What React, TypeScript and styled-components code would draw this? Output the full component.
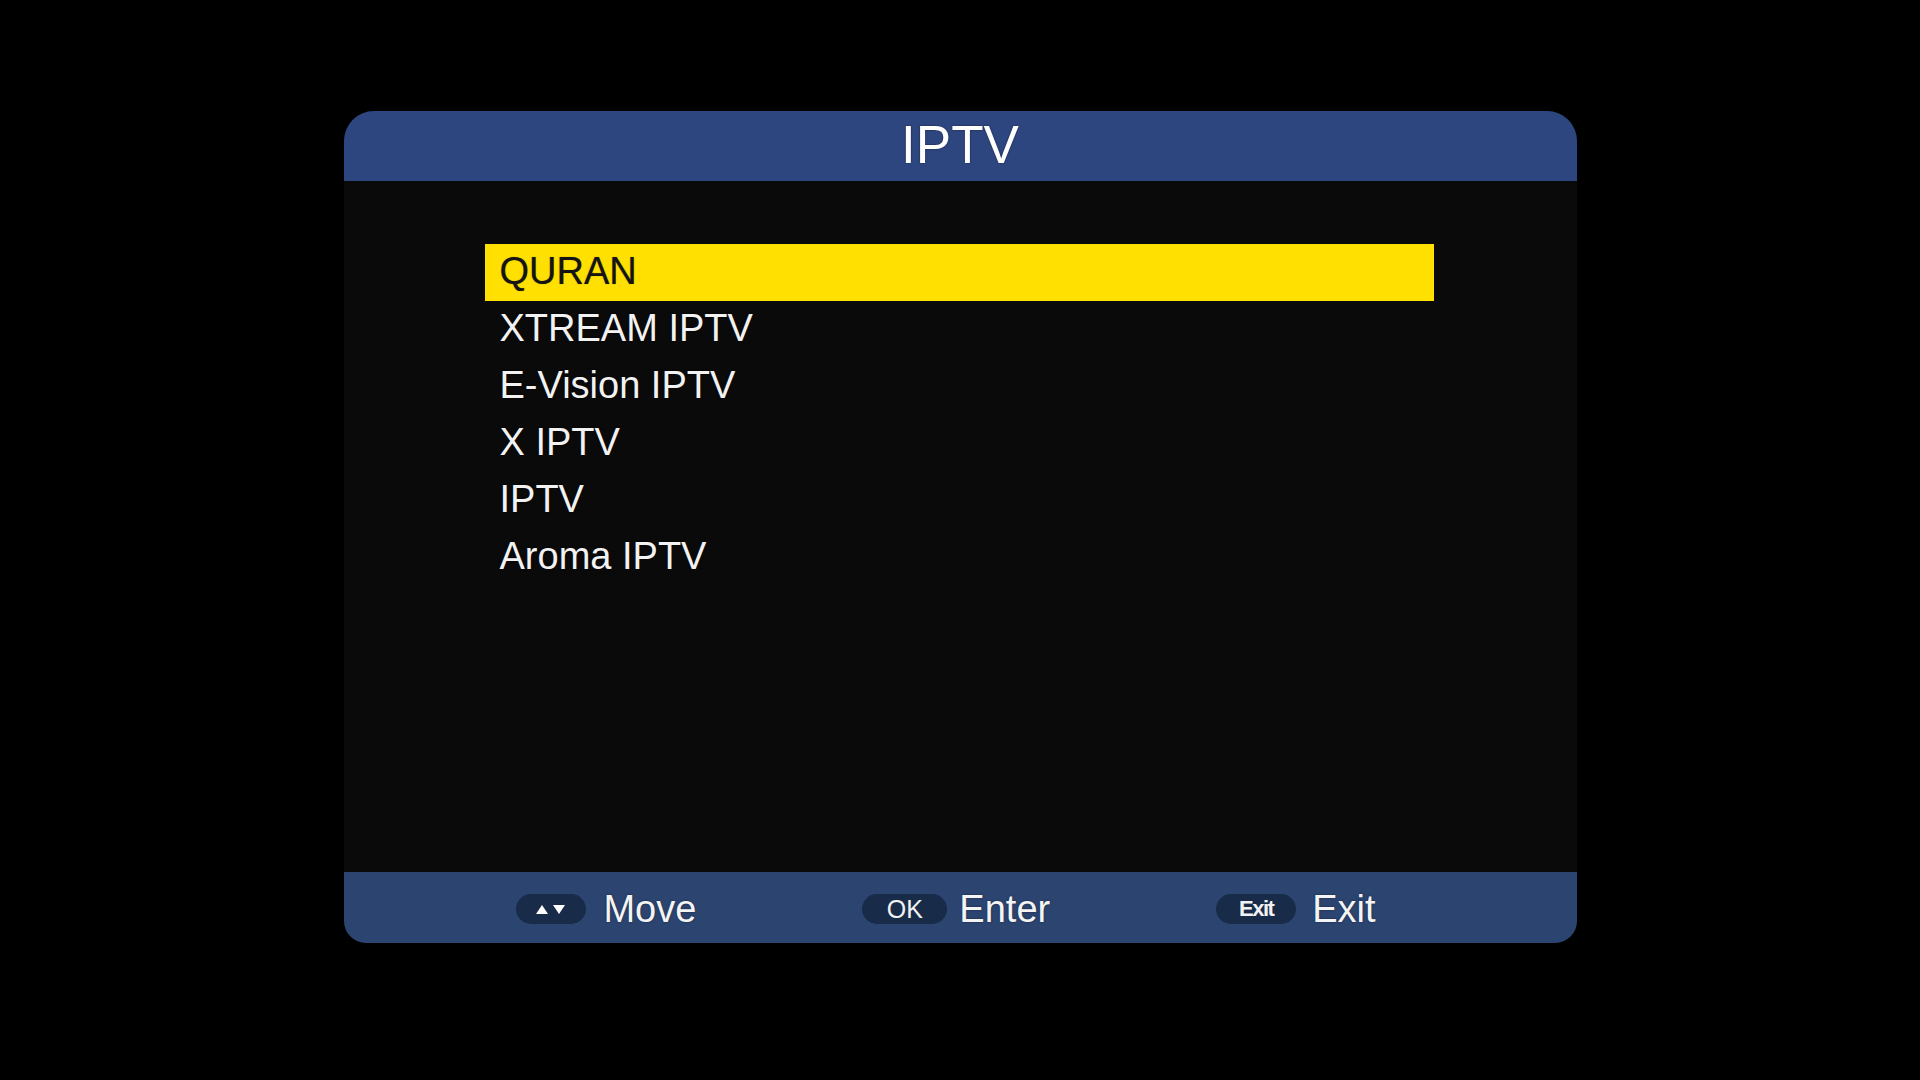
import styled, { createGlobalStyle } from "styled-components";

const GlobalStyle = createGlobalStyle`
    html, body {
        margin: 0;
        padding: 0;
        background: #000000;
    }
    body {
        font-family: "Liberation Sans", Arial, sans-serif;
    }
`;

const StyledScreen = styled.div`
    width: 1920px;
    height: 1080px;
    background: #000000;
    overflow: hidden;
    display: flex;
    justify-content: center;
    align-items: flex-start;
`;

const StyledPanel = styled.div`
    margin-top: 111px;
    width: 1233px;
    height: 832px;
    display: flex;
    flex-direction: column;
    background: #0a0a0a;
    border-radius: 30px 30px 22px 22px;
    overflow: hidden;
`;

const StyledHeader = styled.div`
    height: 70px;
    flex-shrink: 0;
    background: #2e4680;
    display: flex;
    justify-content: center;
    align-items: center;
    color: #ffffff;
    font-size: 53px;
    line-height: 1;
    padding-bottom: 4px;
    box-sizing: border-box;
    text-shadow: 0 0 2px rgba(0, 0, 0, 0.6);
`;

const StyledBody = styled.div`
    flex: 1;
    padding: 63px 143px 0 141px;
`;

const StyledList = styled.div`
    display: flex;
    flex-direction: column;
`;

const StyledItem = styled.div<{ $active?: boolean }>`
    height: 57px;
    display: flex;
    align-items: center;
    padding-left: 15px;
    padding-bottom: 2px;
    box-sizing: border-box;
    font-size: 38px;
    color: ${(p) => (p.$active ? "#141414" : "#f2f2f2")};
    background: ${(p) => (p.$active ? "#ffe000" : "transparent")};
    text-shadow: ${(p) =>
        p.$active ? "0 0 1px rgba(0, 0, 0, 0.5)" : "0 0 2px rgba(0, 0, 0, 0.9)"};
`;

const StyledFooter = styled.div`
    height: 71px;
    flex-shrink: 0;
    background: #2b4470;
    display: flex;
    justify-content: center;
    align-items: center;
    gap: 166px;
    padding-right: 28px;
    padding-top: 3px;
    box-sizing: border-box;
`;

const StyledHint = styled.div<{ $gap: number }>`
    display: flex;
    align-items: center;
    gap: ${(p) => p.$gap}px;
`;

const StyledKey = styled.div<{ $width: number }>`
    width: ${(p) => p.$width}px;
    height: 30px;
    border-radius: 15px;
    background: #182b49;
    display: flex;
    justify-content: center;
    align-items: center;
    color: #f2f2f2;
    font-size: 25px;
    svg {
        display: block;
    }
`;

const StyledKeySmall = styled.span`
    font-size: 22px;
    font-weight: bold;
    letter-spacing: -1.5px;
`;

const StyledHintLabel = styled.span`
    color: #f4f4f4;
    font-size: 38px;
    line-height: 1;
    text-shadow: 0 0 2px rgba(0, 0, 0, 0.5);
`;

const items = ["QURAN", "XTREAM IPTV", "E-Vision IPTV", "X IPTV", "IPTV", "Aroma IPTV"];

const ArrowsIcon = () => (
    <svg width="30" height="11" viewBox="0 0 30 11">
        <polygon points="0,10 6,1 12,10" fill="#ffffff" />
        <polygon points="17,1 29,1 23,10" fill="#ffffff" />
    </svg>
);

export default function App() {
    return (
        <>
            <GlobalStyle />
            <StyledScreen>
                <StyledPanel>
                    <StyledHeader>IPTV</StyledHeader>
                    <StyledBody>
                        <StyledList>
                            {items.map((name, i) => (
                                <StyledItem key={name} $active={i === 0}>
                                    {name}
                                </StyledItem>
                            ))}
                        </StyledList>
                    </StyledBody>
                    <StyledFooter>
                        <StyledHint $gap={17}>
                            <StyledKey $width={70}>
                                <ArrowsIcon />
                            </StyledKey>
                            <StyledHintLabel>Move</StyledHintLabel>
                        </StyledHint>
                        <StyledHint $gap={12}>
                            <StyledKey $width={85}>OK</StyledKey>
                            <StyledHintLabel>Enter</StyledHintLabel>
                        </StyledHint>
                        <StyledHint $gap={16}>
                            <StyledKey $width={80}>
                                <StyledKeySmall>Exit</StyledKeySmall>
                            </StyledKey>
                            <StyledHintLabel>Exit</StyledHintLabel>
                        </StyledHint>
                    </StyledFooter>
                </StyledPanel>
            </StyledScreen>
        </>
    );
}
